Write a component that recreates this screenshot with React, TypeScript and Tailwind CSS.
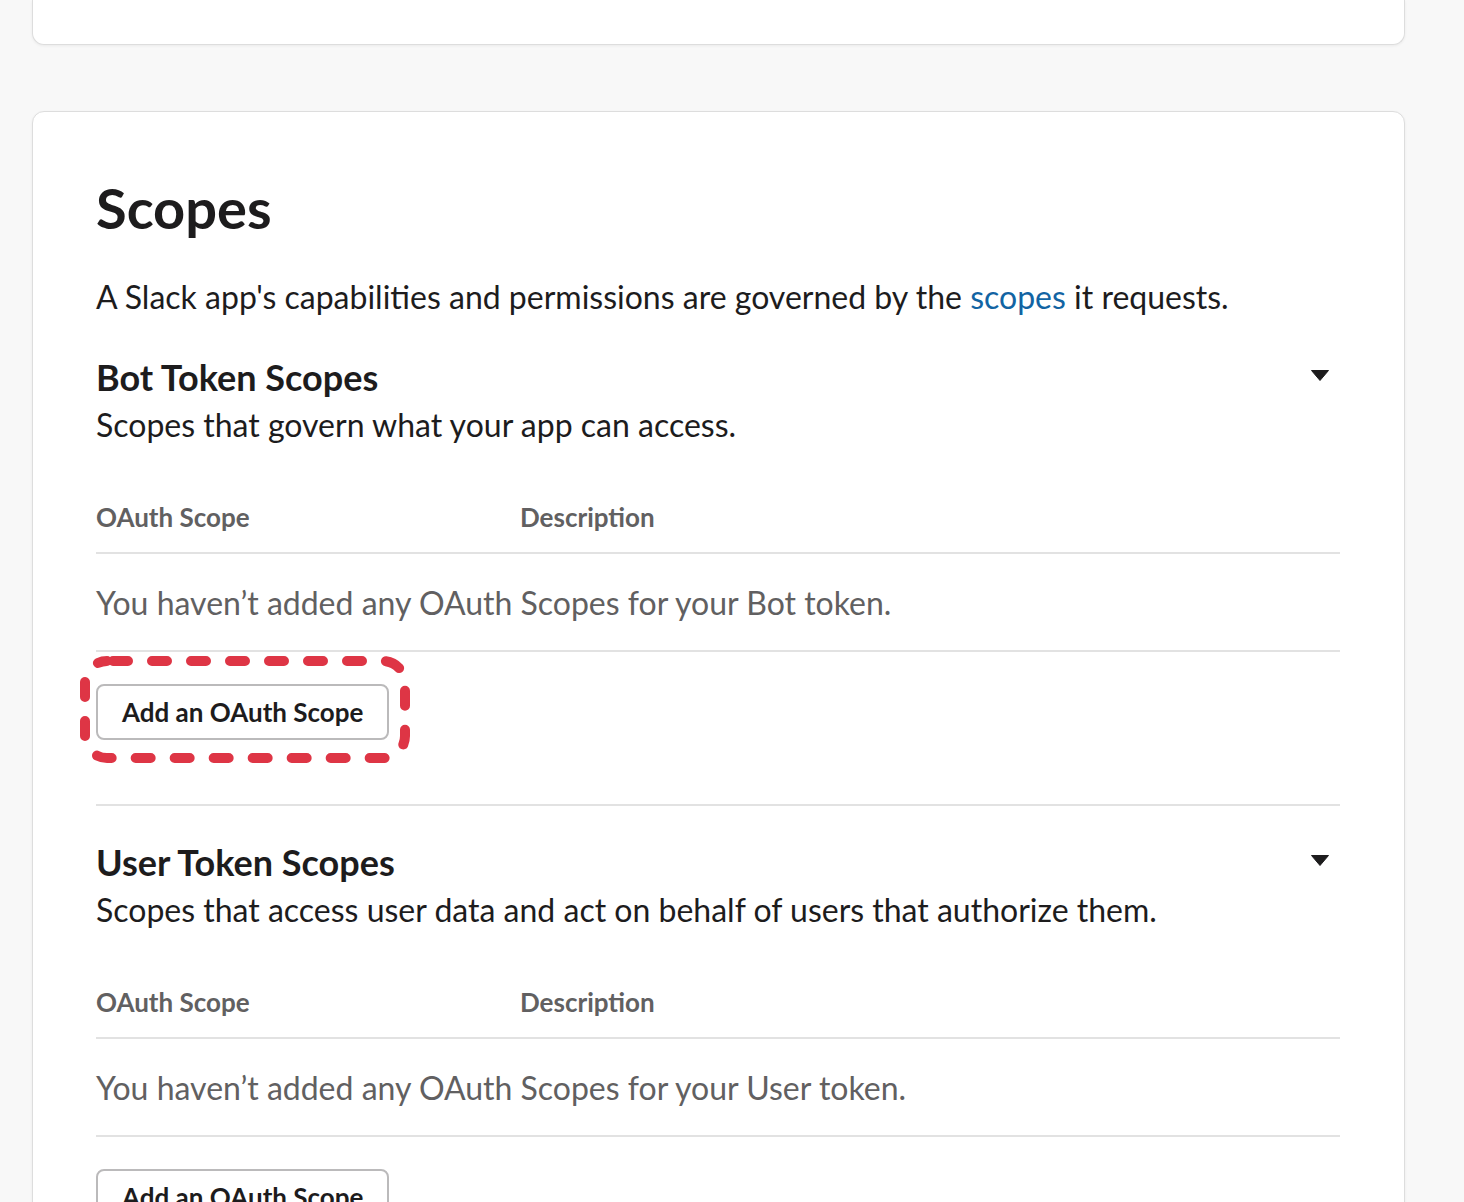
import React from "react";

type Section = {
  title: string;
  subtitle: string;
  empty: string;
  highlight?: boolean;
};

const sections: Section[] = [
  {
    title: "Bot Token Scopes",
    subtitle: "Scopes that govern what your app can access.",
    empty: "You haven\u2019t added any OAuth Scopes for your Bot token.",
    highlight: true,
  },
  {
    title: "User Token Scopes",
    subtitle: "Scopes that access user data and act on behalf of users that authorize them.",
    empty: "You haven\u2019t added any OAuth Scopes for your User token.",
  },
];

function Caret() {
  return (
    <svg width="18" height="11" viewBox="0 0 18 11" className="mr-[11px] mt-[17px] shrink-0">
      <path d="M0.5 0.5 H17.5 L9 10.5 Z" fill="#1d1c1d" stroke="#1d1c1d" strokeLinejoin="round" />
    </svg>
  );
}

function DashedMark() {
  // hand-drawn style annotation around the first button
  return (
    <svg
      width="330"
      height="107"
      viewBox="0 0 330 107"
      className="pointer-events-none absolute left-[-16px] top-[-28px] overflow-visible"
    >
      <rect
        x="5"
        y="5"
        width="320"
        height="97"
        rx="22"
        fill="none"
        stroke="#de3545"
        strokeWidth="10"
        strokeLinecap="round"
        strokeDasharray="15 24"
        strokeDashoffset="-6"
      />
    </svg>
  );
}

function ScopeSection({ s, first }: { s: Section; first: boolean }) {
  return (
    <section className={`border-b-2 border-[#e2e2e2] pb-[64px] ${first ? "mt-[34px]" : "pt-[32px]"}`}>
      <div className="flex items-start justify-between">
        <h3 className="text-[36px] font-bold leading-[48px] text-[#1d1c1d]">{s.title}</h3>
        <Caret />
      </div>
      <p className="mt-[2px] text-[32px] leading-[44px] text-[#1d1c1d]">{s.subtitle}</p>

      <div className="mt-[52px] flex border-b-2 border-[#e2e2e2] pb-[17px] text-[26px] font-bold leading-[36px] text-[#616061]">
        <div className="w-[424px]">OAuth Scope</div>
        <div>Description</div>
      </div>
      <div className="border-b-2 border-[#e2e2e2] pb-[25px] pt-[27px] text-[32px] leading-[44px] text-[#616061]">
        {s.empty}
      </div>

      <div className="relative mt-[32px] inline-block">
        <button className="h-[56px] rounded-[8px] border-2 border-[#bbbabb] bg-white px-[24px] text-[26px] font-bold leading-[36px] text-[#1d1c1d]">
          Add an OAuth Scope
        </button>
        {s.highlight && <DashedMark />}
      </div>
    </section>
  );
}

export default function App() {
  return (
    <div
      className="min-h-screen bg-[#f8f8f8] pl-[32px]"
      style={{ fontFamily: "Lato, 'Noto Sans', sans-serif" }}
    >
      <div className="h-[45px] w-[1373px] rounded-b-[12px] border-x border-b border-[#dddddd] bg-white shadow-[0_1px_3px_rgba(0,0,0,0.06)]" />

      <div className="mt-[66px] w-[1373px] rounded-[12px] border border-[#dddddd] bg-white pl-[63px] pr-[64px] pt-[64px] pb-[64px] shadow-[0_1px_3px_rgba(0,0,0,0.06)]">
        <h2 className="text-[56px] font-bold leading-[64px] text-[#1d1c1d]">Scopes</h2>
        <p className="mt-[35px] text-[32px] leading-[44px] text-[#1d1c1d]">
          A Slack app's capabilities and permissions are governed by the{" "}
          <a href="#" className="text-[#1264a3]">
            scopes
          </a>{" "}
          it requests.
        </p>

        {sections.map((s, i) => (
          <ScopeSection key={s.title} s={s} first={i === 0} />
        ))}
      </div>
    </div>
  );
}
